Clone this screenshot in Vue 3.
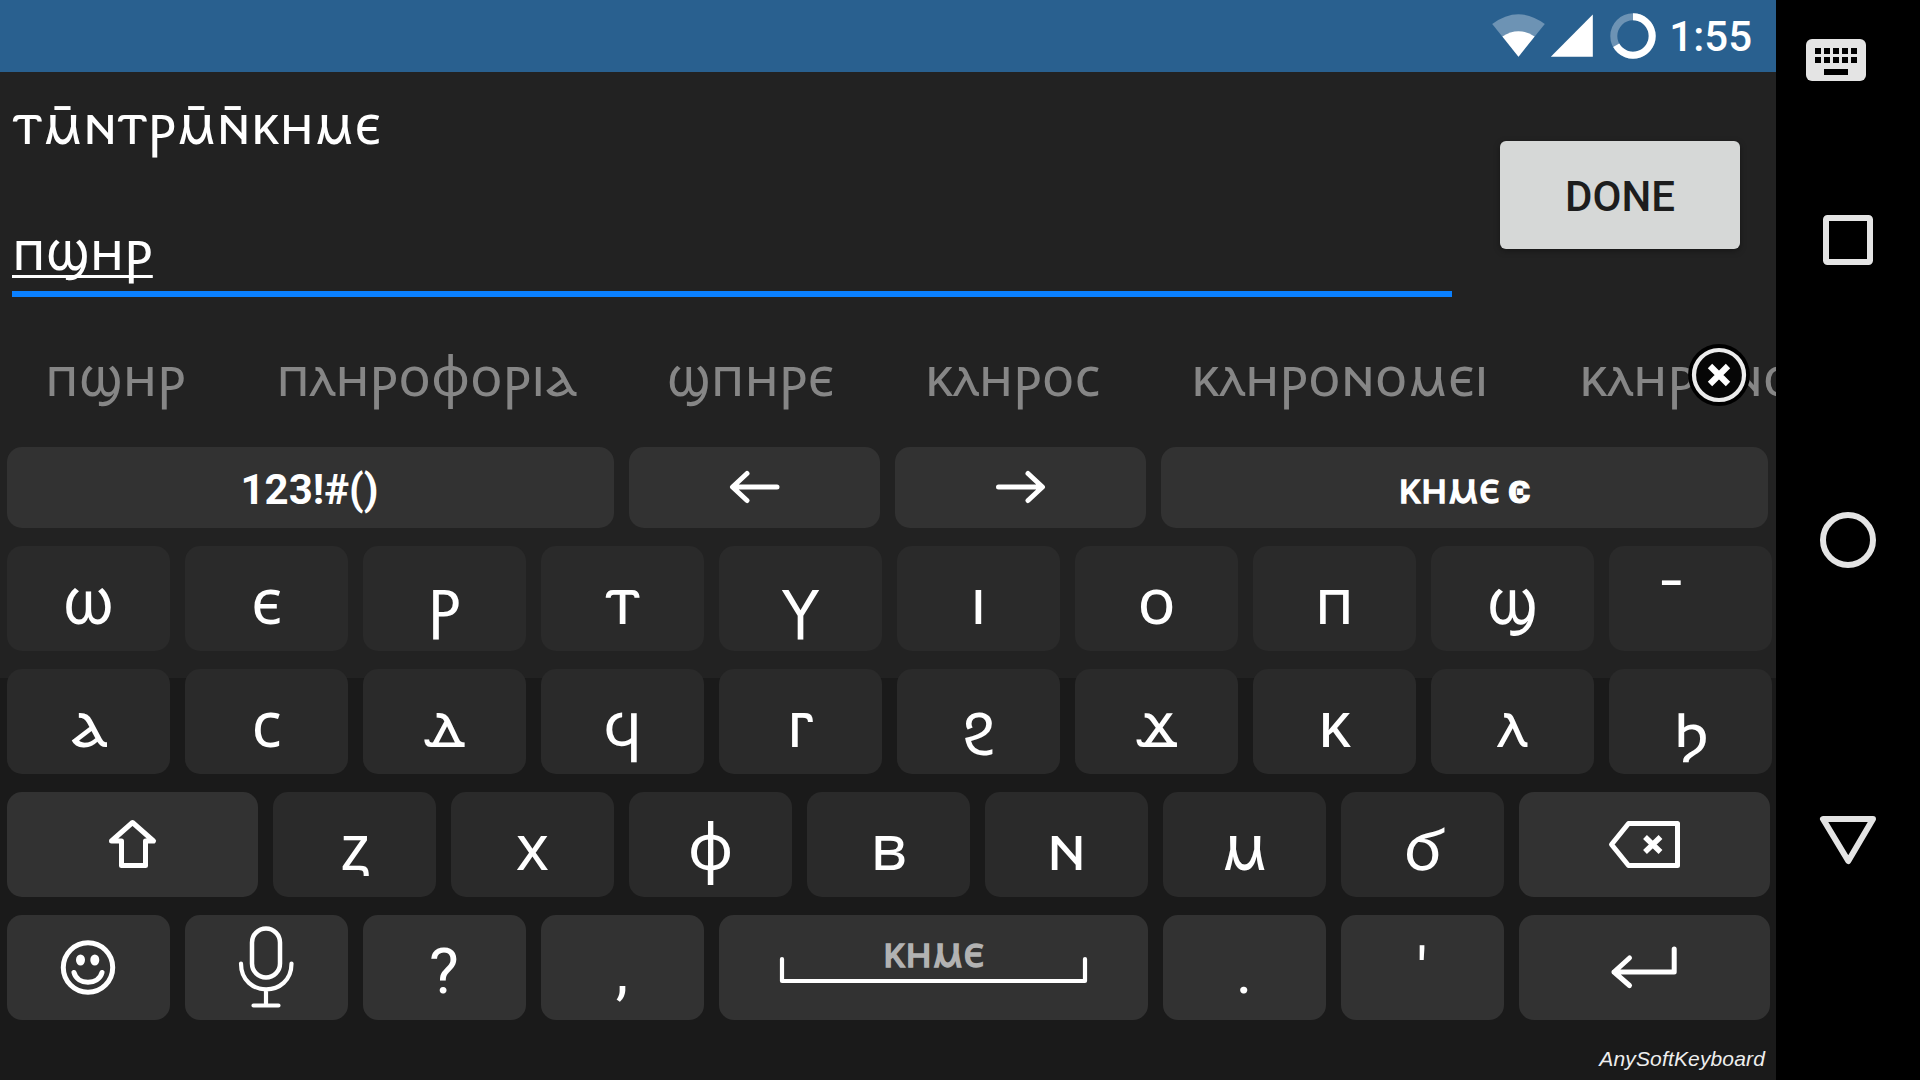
<script setup>
const suggestions = ['ⲡϣⲏⲣ', 'ⲡⲗⲏⲣⲟⲫⲟⲣⲓⲁ', 'ϣⲡⲏⲣⲉ', 'ⲕⲗⲏⲣⲟⲥ', 'ⲕⲗⲏⲣⲟⲛⲟⲙⲉⲓ', 'ⲕⲗⲏⲣⲟⲛⲟⲙⲟⲥ']

const letters = (s) => [...s].map((c) => ({ label: c }))
const fn = (label) => ({ label, fn: true, latin: true })

const rows = [
  [...letters('ⲱⲉⲣⲧⲩⲓⲟⲡϣ'), { label: '\u00a0\u0304', mark: true }],
  letters('ⲁⲥⲇϥⲅϩϫⲕⲗϧ'),
  [{ icon: 'shift', fn: true, wide: true }, ...letters('ⲍⲭⲫⲃⲛⲙϭ'), { icon: 'delete', fn: true, wide: true }],
  [
    { icon: 'smiley', fn: true },
    { icon: 'mic', fn: true },
    fn('?'),
    fn(','),
    { icon: 'space', fn: true, space: true },
    fn('.'),
    fn("'"),
    { icon: 'enter', fn: true, wide: true },
  ],
]
</script>

<template>
  <div class="screen">
    <div class="app">
      <header class="status">
        <svg width="260" height="72" viewBox="1490 0 260 72">
          <path d="M1518.5 56.7 L1492.2 24 Q1518.5 4.5 1544.8 24Z" fill="#6d93b4" />
          <path d="M1518.5 56.7 L1502.4 36.5 Q1518.5 25.8 1534.6 36.5Z" fill="#fff" />
          <path d="M1550.8 56.7 L1592.8 14.5 V56.7Z" fill="#fff" />
          <circle cx="1633" cy="36" r="19.2" fill="none" stroke="#6d93b4" stroke-width="7" />
          <path d="M1633 16.8 A19.2 19.2 0 1 1 1616.2 45.3" fill="none" stroke="#fff" stroke-width="7" />
        </svg>
        <span class="clock">1:55</span>
      </header>

      <section class="editor">
        <div class="fields">
          <div class="line">ⲧⲙ̄ⲛⲧⲣⲙ̄ⲛ̄ⲕⲏⲙⲉ</div>
          <div class="line active"><span class="composing">ⲡϣⲏⲣ</span></div>
        </div>
        <button class="done">DONE</button>
      </section>

      <div class="suggestions">
        <span v-for="s in suggestions" :key="s" class="word">{{ s }}</span>
        <svg class="close" width="64" height="64" viewBox="-32 -32 64 64">
          <circle r="31" fill="#000" />
          <circle r="25" fill="#060606" stroke="#ececec" stroke-width="4.2" />
          <path d="M-9 -9 L9 9 M9 -9 L-9 9" stroke="#fff" stroke-width="6.2" />
        </svg>
      </div>

      <div class="keyboard">
        <div class="row top">
          <div class="key fn broad"><span class="mode">123!#()</span></div>
          <div class="key fn wide">
            <svg viewBox="629 447 251 81">
              <path d="M777 487 H733 M747 473.500 L732.500 487 L747 500.500" class="st" stroke-width="5" />
            </svg>
          </div>
          <div class="key fn wide">
            <svg viewBox="895 447 251 81">
              <path d="M998.500 487 H1042 M1028 473.500 L1042.500 487 L1028 500.500" class="st" stroke-width="5" />
            </svg>
          </div>
          <div class="key fn broad"><span class="lang">ⲕⲏⲙⲉ<span class="sigma"> ͼ</span></span></div>
        </div>

        <div v-for="(row, r) in rows" :key="r" class="row">
          <div
            v-for="(k, i) in row"
            :key="i"
            class="key"
            :class="{ fn: k.fn, wide: k.wide, space: k.space, latin: k.latin, mark: k.mark }"
          >
            <span v-if="k.label" class="glyph">{{ k.label }}</span>
            <svg v-else-if="k.icon === 'shift'" viewBox="7 792 251 105">
              <path d="M132.500 822.500 L153.500 841 H145.500 V865.500 H121.500 V841 H111.500 Z" class="st" stroke-width="5" />
            </svg>
            <svg v-else-if="k.icon === 'delete'" viewBox="1519 792 251 105">
              <path d="M1611.500 844.500 L1628.500 823.500 H1677.500 V865.500 H1628.500 Z" class="st" stroke-width="5" />
              <path d="M1645 837 L1660.500 852 M1660.500 837 L1645 852" class="st butt" stroke-width="5.500" />
            </svg>
            <svg v-else-if="k.icon === 'smiley'" viewBox="7 915 163 105">
              <circle cx="88" cy="967.500" r="24.700" class="st" stroke-width="5" />
              <ellipse cx="80.500" cy="960" rx="4.500" ry="5.500" fill="#fff" />
              <ellipse cx="94.800" cy="960" rx="4.500" ry="5.500" fill="#fff" />
              <path d="M74 972.500 C77.500 985.500 98.500 985.500 102 972.500" class="st" stroke-width="5" />
            </svg>
            <svg v-else-if="k.icon === 'mic'" viewBox="185 915 163 105">
              <rect x="252" y="928.500" width="28" height="49" rx="14" class="st" stroke-width="4.500" />
              <path d="M241 963.500 C241 998 291.500 998 291.500 963.500 M266 990 V1005.500 M253.500 1005.500 H278.500" class="st" stroke-width="4.200" />
            </svg>
            <template v-else-if="k.icon === 'space'">
              <svg viewBox="719 915 429 105">
                <path d="M782 959 V981 H1085 V959" class="st" stroke-width="4.200" />
              </svg>
              <span class="space-label">ⲕⲏⲙⲉ</span>
            </template>
            <svg v-else-if="k.icon === 'enter'" viewBox="1519 915 251 105">
              <path d="M1674.200 949 V972 H1614 M1629.500 958 L1614 972 L1629.500 985.500" class="st" stroke-width="5" />
            </svg>
          </div>
        </div>
        <div class="brand">AnySoftKeyboard</div>
      </div>
    </div>

    <nav class="nav">
      <svg width="144" height="1080" viewBox="1776 0 144 1080">
        <rect x="1806" y="39" width="60" height="42" rx="6" fill="#e4e4e4" />
        <template v-for="c in 5" :key="c">
          <rect v-for="r in 2" :key="r" :x="1806 + c * 9" :y="39 + r * 9" width="6" height="6" fill="#000" />
        </template>
        <rect x="1824" y="69" width="24" height="6" fill="#000" />
        <rect x="1826" y="218" width="44" height="44" rx="1.5" fill="none" stroke="#e4e4e4" stroke-width="6" />
        <circle cx="1848" cy="540" r="25" fill="none" stroke="#e4e4e4" stroke-width="6" />
        <path d="M1823 819 H1873 L1848.300 861 Z" fill="none" stroke="#e4e4e4" stroke-width="6" stroke-linejoin="round" />
      </svg>
    </nav>
  </div>
</template>

<style>
body {
  background: #000;
  overflow: hidden;
}
</style>

<style scoped>
.screen {
  display: flex;
  width: 1920px;
  height: 1080px;
  background: #000;
  color: #fff;
  font-family: Roboto, 'Noto Sans Coptic', sans-serif;
}
.app {
  display: flex;
  flex-direction: column;
  width: 1776px;
  height: 1080px;
  overflow: hidden;
  background: linear-gradient(#222 0 678px, #1a1a1a 678px);
}
.app > * {
  flex: none;
}
.status {
  display: flex;
  justify-content: flex-end;
  height: 72px;
  padding-right: 24px;
  background: #29608f;
}
.status svg {
  margin-right: -81px;
}
.clock {
  font-size: 42px;
  font-weight: 500;
  line-height: 74px;
}
.editor {
  display: flex;
  justify-content: space-between;
  align-items: flex-start;
  height: 258px;
  padding: 0 36px 0 12px;
}
.fields {
  width: 1440px;
}
.line {
  height: 102px;
  font-family: 'Noto Sans Coptic', sans-serif;
  font-size: 54px;
  line-height: 102px;
  white-space: nowrap;
}
.active {
  height: 117px;
  line-height: 150px;
  border-bottom: 6px solid #0a80ff;
}
.composing {
  text-decoration: underline;
  text-decoration-thickness: 3px;
  text-decoration-skip-ink: none;
  text-underline-offset: 5px;
}
.done {
  width: 240px;
  height: 108px;
  margin-top: 69px;
  padding: 0;
  border: 0;
  border-radius: 6px;
  background: #d6d8d7;
  box-shadow: 0 2px 6px rgba(0, 0, 0, 0.35);
  color: #1d1d1d;
  font: 500 42px/111px Roboto, sans-serif;
}
.suggestions {
  position: relative;
  display: flex;
  gap: 90.5px;
  height: 117px;
  padding-left: 45px;
  overflow: hidden;
  color: #868686;
  font-family: 'Noto Sans Coptic', sans-serif;
  font-size: 54px;
  line-height: 90px;
  white-space: nowrap;
}
.word {
  flex: none;
}
.close {
  position: absolute;
  left: 1687px;
  top: 13px;
}
.keyboard {
  display: flex;
  flex-direction: column;
  gap: 18px;
  padding-left: 7px;
}
.row {
  display: flex;
  gap: 15px;
  height: 105px;
}
.top {
  height: 81px;
}
.key {
  position: relative;
  flex: none;
  width: 163px;
  height: 100%;
  border-radius: 15px;
  background: #2a2a2a;
  text-align: center;
}
.fn {
  background: #323232;
}
.wide {
  width: 251px;
}
.broad {
  width: 607px;
}
.space {
  width: 429px;
}
.key svg {
  display: block;
  width: 100%;
  height: 100%;
}
.glyph {
  display: block;
  height: 105px;
  font-family: 'Noto Sans Coptic', sans-serif;
  font-size: 63px;
  line-height: 107px;
}
.mark .glyph {
  padding-right: 14px;
}
.latin .glyph {
  padding-right: 1px;
  font-family: Roboto, sans-serif;
  line-height: 113px;
}
.mode {
  margin-right: 2px;
  font-size: 42px;
  font-weight: 700;
  line-height: 85px;
}
.lang {
  font-family: 'Noto Sans Coptic', sans-serif;
  font-size: 42px;
  font-weight: 700;
  line-height: 80px;
  word-spacing: -2px;
}
.sigma {
  font-family: Roboto, sans-serif;
  font-size: 41px;
  -webkit-text-stroke: 1px #fff;
}
.space-label {
  position: absolute;
  left: 0;
  right: 0;
  top: 0;
  color: #b2b2b2;
  font-family: 'Noto Sans Coptic', sans-serif;
  font-size: 42px;
  font-weight: 700;
  line-height: 72px;
}
.st {
  fill: none;
  stroke: #fff;
  stroke-linecap: round;
  stroke-linejoin: round;
}
.butt {
  stroke-linecap: butt;
}
.brand {
  padding-right: 11px;
  color: #eee;
  font: italic 21px/42px 'Liberation Sans', sans-serif;
  letter-spacing: 0.15px;
  text-align: right;
}
</style>
